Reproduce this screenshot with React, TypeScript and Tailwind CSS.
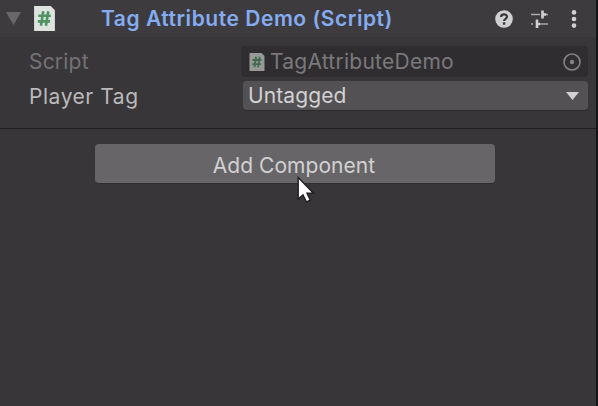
function ScriptIcon({ className }: { className: string }) {
  return (
    <svg viewBox="0 0 20 24" className={className}>
      <path d="M0 0H16L20 4V24H0Z" fill="#dfe3df" />
      <path d="M8.8 5L6.6 19M13.6 5L11.4 19M4 9.4H16M3.6 14.8H15.4" stroke="#4f9562" strokeWidth="2.5" fill="none" />
    </svg>
  );
}

function HeaderIcons() {
  return (
    <div className="flex items-center">
      <svg viewBox="0 0 18 18" className="h-[18px] w-[18px]">
        <circle cx="9" cy="9" r="8.8" fill="#d0cfd1" />
        <path d="M6 7C6 3.4 12 3.5 12 6.8C12 9 9.1 8.8 9.1 11" stroke="#39373a" strokeWidth="2.2" fill="none" />
        <rect x="7.9" y="12.3" width="2.4" height="2.4" fill="#39373a" />
      </svg>
      <svg viewBox="0 0 18 18" className="ml-[17px] h-[18px] w-[18px]">
        <path d="M1 4.5H10M15 4.5H18M1 14H3M8 14H18" stroke="#aaa9ab" strokeWidth="1.5" />
        <path d="M12.5 0.5V8.5M7 9.5V18" stroke="#d0cfd1" strokeWidth="2.6" />
        <path d="M13 4.5H16M7 14H10" stroke="#d0cfd1" strokeWidth="2.4" />
      </svg>
      <svg viewBox="0 0 6 18" className="ml-[23px] h-[18px] w-[6px]" fill="#d0cfd1">
        <circle cx="3" cy="2.4" r="2.3" />
        <circle cx="3" cy="9" r="2.3" />
        <circle cx="3" cy="15.6" r="2.3" />
      </svg>
    </div>
  );
}

export default function App() {
  return (
    <div className="flex h-[406px] w-[598px] overflow-hidden bg-[#151416] font-['Inter',sans-serif] text-[21px] leading-[30px] text-[#d2d1d3]">
      <div className="flex h-full w-[596px] shrink-0 flex-col bg-[#383639]">
        <header className="flex h-[37px] shrink-0 items-center bg-[#3d3b3e] pr-[19px] pl-[6px]">
          <svg viewBox="0 0 15 13" className="h-[13px] w-[15px]">
            <path d="M0 0H15L7.5 13Z" fill="#69676a" />
          </svg>
          <ScriptIcon className="ml-[13px] h-[25px] w-[21px]" />
          <h1 className="ml-[46px] grow pt-px text-[21px] font-semibold tracking-[0.54px] whitespace-nowrap text-[#84acf2]">
            Tag Attribute Demo (Script)
          </h1>
          <HeaderIcons />
        </header>
        <div className="flex h-[92px] shrink-0 flex-col gap-[4px] border-b border-[#1f1e20] pt-[9px] pr-[8px] pl-[29px]">
          <div className="flex h-[31px] items-center">
            <span className="w-[212px] pt-px tracking-[0.2px] text-[#747275]">Script</span>
            <div className="flex h-[31px] grow items-center rounded-[4px] bg-[#2f2d30] pr-[7px] pl-[8px]">
              <ScriptIcon className="h-[18px] w-[16px] opacity-60" />
              <span className="ml-[5px] grow pt-px tracking-[0.25px] text-[#7b797c]">TagAttributeDemo</span>
              <svg viewBox="0 0 18 18" className="h-[18px] w-[18px]">
                <circle cx="9" cy="9" r="8" fill="none" stroke="#858386" strokeWidth="1.6" />
                <circle cx="9" cy="9" r="2.2" fill="#858386" />
              </svg>
            </div>
          </div>
          <div className="flex h-[30px] items-center">
            <span className="w-[214px] pt-[2px] tracking-[0.55px] text-[#bab9bb]">Player Tag</span>
            <div className="flex h-[30px] grow items-center justify-between rounded-[4px] border-b border-[#2e2c2f] bg-[#535154] pr-[9px] pl-[5px]">
              <span className="tracking-[0.1px]">Untagged</span>
              <svg viewBox="0 0 13 8" className="h-[8px] w-[13px]">
                <path d="M0 0H13L6.5 8Z" fill="#d2d1d3" />
              </svg>
            </div>
          </div>
        </div>
        <div className="pt-[15px] pl-[95px]">
          <button className="relative flex h-[40px] w-[400px] items-center justify-center rounded-[4px] border-b border-[#2e2c2f] bg-[#676568] pt-[5px]">
            <span className="pr-[2px] tracking-[0.05px]">Add Component</span>
            <svg viewBox="0 0 18 28" className="absolute top-[32px] left-[202px] h-[28px] w-[18px]">
              <path d="M1.2 1.5V23L6 18.8L9.5 26L13.3 24.2L10 17.3H16.5Z" fill="#fff" stroke="#202020" strokeWidth="1.4" />
            </svg>
          </button>
        </div>
      </div>
    </div>
  );
}
